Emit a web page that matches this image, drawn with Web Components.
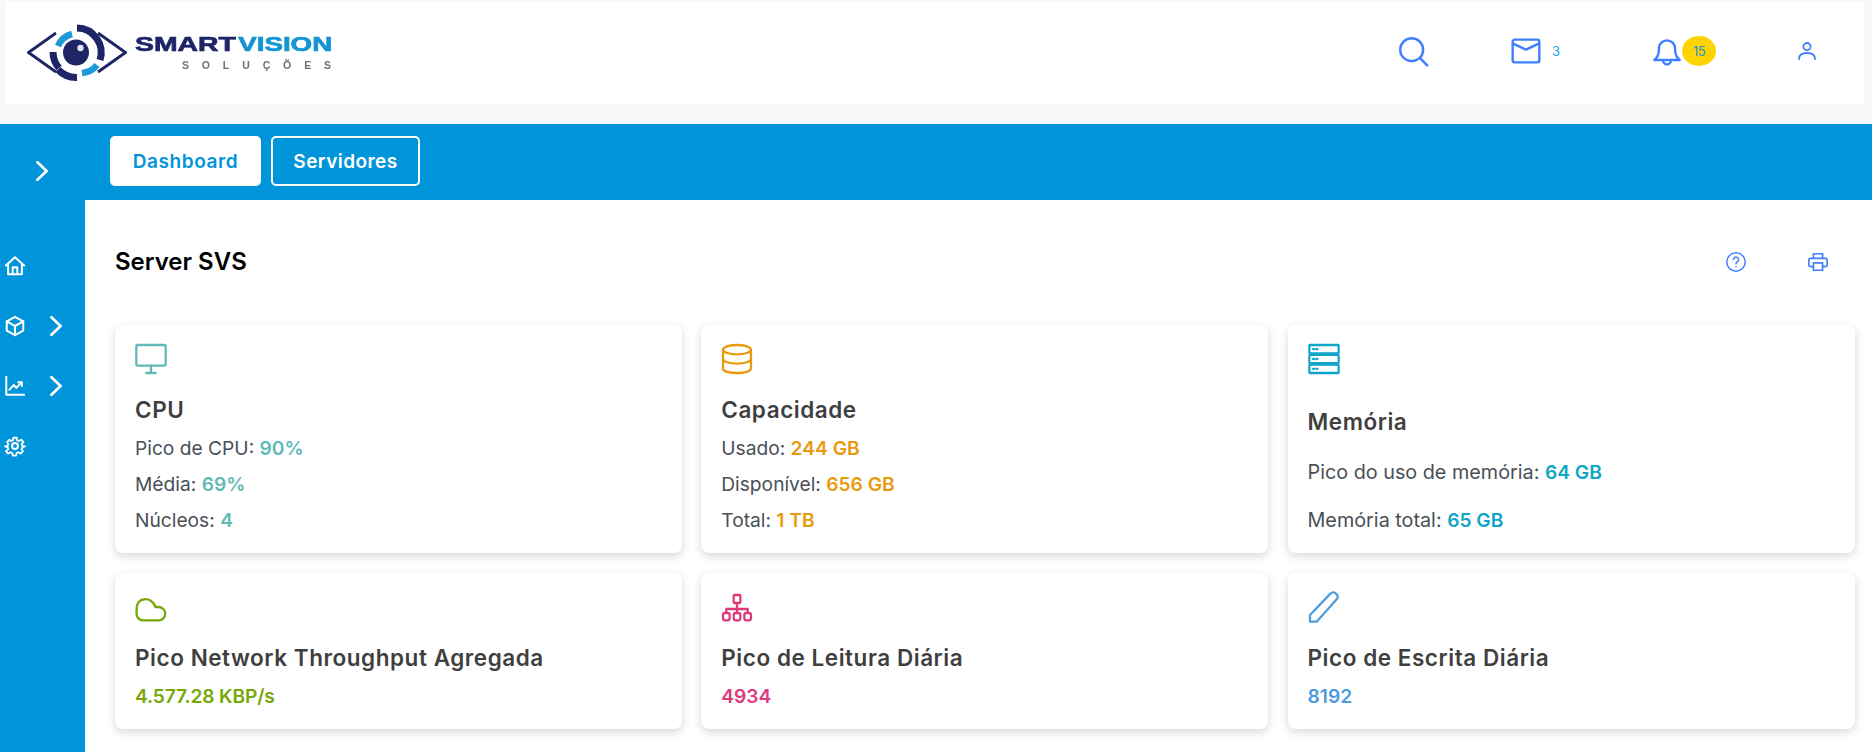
<!DOCTYPE html>
<html lang="pt"><head><meta charset="utf-8"><title>Server SVS</title>
<style>html,body{margin:0;height:752px;overflow:hidden;background:#f7f8fa}body{font-family:Inter,"Liberation Sans",sans-serif}</style>
</head><body>
<sv-app>
  <sv-header slot="header"></sv-header>
  <sv-sidebar slot="sidebar"></sv-sidebar>
  <sv-tabs slot="tabs"></sv-tabs>
  <sv-title slot="main">Server SVS</sv-title>
  <sv-grid slot="main">
    <stat-card icon="monitor" color="#5fbab8" title="CPU"><p>Pico de CPU: <b>90%</b></p><p>Média: <b>69%</b></p><p>Núcleos: <b>4</b></p></stat-card>
    <stat-card icon="database" color="#e99a0c" title="Capacidade"><p>Usado: <b>244 GB</b></p><p>Disponível: <b>656 GB</b></p><p>Total: <b>1 TB</b></p></stat-card>
    <stat-card icon="server" color="#0ea5c9" title="Memória" spread><p>Pico do uso de memória: <b>64 GB</b></p><p>Memória total: <b>65 GB</b></p></stat-card>
    <stat-card icon="cloud" color="#76a80a" title="Pico Network Throughput Agregada"><p><b style="letter-spacing:-.15px">4.577.28 KBP/s</b></p></stat-card>
    <stat-card icon="network" color="#dc3a7c" title="Pico de Leitura Diária"><p><b>4934</b></p></stat-card>
    <stat-card icon="pen" color="#4c9bdc" title="Pico de Escrita Diária"><p><b>8192</b></p></stat-card>
  </sv-grid>
</sv-app>
<script>
const P={
 search:'<circle cx="11" cy="11" r="8.6"/><path d="M17.3 17.3 22.6 22.8"/>',
 mail:'<rect x="2" y="3.5" width="20" height="17" rx="1.5"/><path d="M2.4 6.5 12 11l9.6-4.5"/>',
 bell:'<path d="M6 10a6 6 0 0 1 12 0c0 5 1 7 3.500 8.800h-19C5 17 6 15 6 10Z"/><path d="M9 19a3 3 0 0 0 6 0"/>',
 user:'<circle cx="12" cy="7.600" r="3.600"/><path d="M4 20c0-4 3.500-6 8-6s8 2 8 6"/>',
 help:'<circle cx="12" cy="12" r="10"/><path d="M9.200 9.300a2.800 2.800 0 1 1 4.400 2.400c-1 .7-1.600 1.200-1.600 2.600"/><path d="M12 17.200v.3"/>',
 print:'<path d="M7 8V3h10v5"/><path d="M7 17H4a2 2 0 0 1-2-2v-5a2 2 0 0 1 2-2h16a2 2 0 0 1 2 2v5a2 2 0 0 1-2 2h-3"/><rect x="7" y="13" width="10" height="8"/>',
 home:'<path d="M2 11.500 12 2.500l10 9"/><path d="M4.500 9.500V21h15V9.500"/><path d="M9.500 21v-7.500h5V21"/>',
 cube:'<path d="M12 2 21 7v10l-9 5-9-5V7Z"/><path d="M3 7l9 5 9-5M12 12v10"/>',
 chart:'<path d="M2.500 2v19.500H22"/><path d="M6 16l4.500-5 3 3 5.500-6"/><path d="M15.500 8H19.500v4"/>',
 gear:'<circle cx="12" cy="12" r="3.200"/><path d="M10 2h4l.6 3 2.300 1 2.600-1.600 2.800 2.800L20 9.800l1 2.200 3 .6v0l-3 .9-1 2.300 1.600 2.600-2.800 2.800-2.600-1.600-2.300 1-.6 3h-4l-.6-3-2.300-1-2.600 1.600-2.800-2.800L4 15.800l-1-2.300-3-.9 3-.6 1-2.200-1.600-2.600 2.800-2.800L7.100 6l2.300-1Z" transform="translate(1.200 1.200) scale(.9)"/>',
 chev:'<path d="M6.500 1.500 17.500 12 6.500 22.500"/>',
 monitor:'<rect x="1" y="1.500" width="22" height="15.500" rx=".8"/><path d="M12 17v5M8.500 22.500h7"/>',
 database:'<ellipse cx="12" cy="5" rx="10.500" ry="3.500"/><path d="M1.500 5v14.200c0 2 4.700 3.300 10.500 3.300s10.500-1.300 10.500-3.300V5"/><path d="M1.500 12c0 2 4.700 3.400 10.500 3.400S22.500 14 22.500 12"/>',
 server:'<rect x="1" y="1.500" width="22" height="6.200" rx=".6"/><rect x="1" y="8.900" width="22" height="6.200" rx=".6"/><rect x="1" y="16.300" width="22" height="6.200" rx=".6"/><path d="M3.800 4.600h.8M6.300 4.600h.8M3.800 12h.8M6.300 12h.8M3.800 19.400h.8M6.300 19.400h.8"/>',
 cloud:'<path d="M6 22a4.800 4.800 0 0 1-4.800-5C1 13.500 1 10.500 2.800 8.300 4.800 5.800 9 5.500 11.800 7.300c2 1.300 3 3 3.600 4.700h2.300a5 5 0 0 1 0 10Z"/>',
 network:'<rect x="9.500" y="3" width="5" height="6" rx=".8"/><path d="M12 9v4.500M4 16.500v-3h16v3M12 13.500v3"/><rect x="1.500" y="16.500" width="5" height="5.500" rx="1.500"/><rect x="9.500" y="16.500" width="5" height="5.500" rx="1.500"/><rect x="17.500" y="16.500" width="5" height="5.500" rx="1.500"/>',
 pen:'<path d="M1.500 23v-5L17 1.800a2.500 2.500 0 0 1 3.500-.2l1 .9a2.500 2.500 0 0 1 .2 3.500L6.500 23Z"/>'
};
function ic(n,s,w,c){return `<svg width="${s}" height="${s}" viewBox="0 0 24 24" fill="none" stroke="${c||'currentColor'}" stroke-width="${w}" stroke-linecap="round" stroke-linejoin="round" aria-hidden="true">${P[n]}</svg>`}
class Base extends HTMLElement{constructor(){super();this.attachShadow({mode:'open'})}}
customElements.define('sv-app',class extends Base{connectedCallback(){this.shadowRoot.innerHTML=`<style>
:host{display:grid;grid-template-columns:85px 1fr;grid-template-rows:124px 76px 552px;height:752px;color:#000}
.top{grid-column:1/3;padding:1px 8px 20px 5px;box-sizing:border-box;height:124px}
.side{grid-row:2/4;background:#0095db}
.tabs{background:#0095db}
.main{background:#fff;padding:0 18px 0 30px;min-width:0;overflow:hidden}
</style><div class="top"><slot name="header"></slot></div><div class="side"><slot name="sidebar"></slot></div><div class="tabs"><slot name="tabs"></slot></div><div class="main"><slot name="main"></slot></div>`}});
customElements.define('sv-header',class extends Base{connectedCallback(){this.shadowRoot.innerHTML=`<style>
:host{display:flex;align-items:center;background:#fff;height:103px;color:#3f7fff}
.logo{display:flex;align-items:center;margin-left:22px;gap:8px}
.logo svg{filter:blur(.5px)}
.word{display:flex;flex-direction:column;align-items:flex-end;width:197px;font-family:"Liberation Sans",sans-serif;filter:blur(.5px)}
.w1{display:flex;justify-content:space-between;width:197px;font-weight:700;font-size:21px;line-height:18px;-webkit-text-stroke:.7px}
.w1 span:first-child{color:#1d2566;display:inline-block;transform:scaleX(1.35);transform-origin:left}
.w1 span:last-child{color:#1394d3;display:inline-block;transform:scaleX(1.32);transform-origin:right}
.w2{font-size:10.500px;line-height:12px;letter-spacing:12.900px;margin-right:-12px;margin-top:6px;color:#6c6f7c;font-weight:700}
.icons{margin-left:auto;display:flex;align-items:center;height:40px;margin-top:-3px}
.i{display:flex;position:relative}
.n3{font:13px Inter,sans-serif;color:#1aa4e8;margin-left:10px}
.badge{width:34px;height:30px;border-radius:50%;background:#fdd400;color:#1e90d8;font:13px/30px Inter,sans-serif;text-align:center;margin-left:-1px;letter-spacing:-.5px}
</style><div class="logo"><svg width="100" height="60" viewBox="0 0 100 60" fill="none" aria-hidden="true">
<path d="M29 10 1.500 29.500 29 49M71 10 98.500 29.500 71 49" stroke="#1d2566" stroke-width="2.800"/>
<path d="M50 5a24.500 24.500 0 0 1 23 32M32 45a24.500 24.500 0 0 1-6-16" stroke="#1d2566" stroke-width="7"/>
<path d="M31 46.500a25 25 0 0 0 19 8" stroke="#1d2566" stroke-width="7"/>
<path d="M70 42a21 21 0 0 1-15 8M31 23a21 21 0 0 1 14-12" stroke="#1b9ad8" stroke-width="6.500"/>
<circle cx="49" cy="29.500" r="13" fill="#1d2566"/><circle cx="53.500" cy="25" r="3.200" fill="#dfe3f2"/></svg>
<div class="word"><div class="w1"><span>SMART</span><span>VISION</span></div><div class="w2">SOLUÇÕES</div></div></div>
<div class="icons">
<span class="i" style="margin-right:81px">${ic('search',32,1.800)}</span>
<span class="i">${ic('mail',32,1.800)}</span><span class="n3" style="margin-right:91px">3</span>
<span class="i">${ic('bell',32,1.800)}</span><span class="badge" style="margin-right:79px">15</span>
<span class="i" style="margin-right:45px">${ic('user',24,1.800)}</span>
</div>`}});
customElements.define('sv-sidebar',class extends Base{connectedCallback(){const row=(n,c)=>`<div class="r">${ic(n,22,2.200,'#fff')}${c?`<span class="c">${ic('chev',20,3.200,'#fff')}</span>`:''}</div>`;
this.shadowRoot.innerHTML=`<style>
:host{display:block;height:100%}
.t{height:76px;display:flex;align-items:center;justify-content:center;padding-top:17px;padding-right:1px;box-sizing:border-box}
.r{height:60px;display:flex;align-items:center;padding-left:4px;box-sizing:border-box}
.c{margin-left:20px;display:flex}
.list{margin-top:36px}
svg{display:block}
</style><div class="t">${ic('chev',20,3.200,'#fff')}</div><div class="list">${row('home')}${row('cube',1)}${row('chart',1)}${row('gear')}</div>`}});
customElements.define('sv-tabs',class extends Base{connectedCallback(){this.shadowRoot.innerHTML=`<style>
:host{display:flex;align-items:flex-start;gap:10px;padding:12px 0 0 25px}
a{display:flex;align-items:center;justify-content:center;height:50px;box-sizing:border-box;border-radius:5px;font:600 19px Inter,sans-serif;color:#fff}
.a{width:151px;background:#fff;color:#0095db;letter-spacing:.6px}.b{width:149px;border:2px solid #fff;letter-spacing:.45px}
</style><a class="a">Dashboard</a><a class="b">Servidores</a>`}});
customElements.define('sv-title',class extends Base{connectedCallback(){this.shadowRoot.innerHTML=`<style>
:host{display:flex;align-items:center;height:125px;padding-bottom:2px;color:#000;box-sizing:border-box}
h1{font:600 24px Inter,sans-serif;margin:0;flex:1}
.ic{display:flex;color:#3f7fff;gap:60px;margin-right:25px}
</style><h1><slot></slot></h1><div class="ic">${ic('help',22,1.600)}${ic('print',22,1.800)}</div>`}});
customElements.define('sv-grid',class extends Base{connectedCallback(){this.shadowRoot.innerHTML=`<style>
:host{display:grid;grid-template-columns:repeat(3,567px);column-gap:19.250px;row-gap:20px}
</style><slot></slot>`}});
customElements.define('stat-card',class extends Base{connectedCallback(){const sp=this.hasAttribute('spread');const c=this.getAttribute('color');
this.style.setProperty('--c',c);
this.shadowRoot.innerHTML=`<style>
:host{display:block;background:#fff;border-radius:8px;box-shadow:0 3px 10px rgba(0,0,0,.16);padding:16px 20px 15px;box-sizing:border-box;color:#495057}
.icon{height:34px;display:flex;align-items:flex-end;color:var(--c)}
h2{font:600 22.500px/30px Inter,sans-serif;letter-spacing:.55px;color:#3f3f3f;margin:${sp?32:20}px 0 ${sp?17:5}px}
.l{display:flex;flex-direction:column;gap:${sp?12:0}px;font:400 ${sp?19.8:19.2}px/36px Inter,sans-serif}
::slotted(p){margin:0;height:36px;color:#495057}
</style><div class="icon">${ic(this.getAttribute('icon'),32,1.700)}</div><h2>${this.getAttribute('title')}</h2><div class="l"><slot></slot></div>`;
this.removeAttribute('title');
this.querySelectorAll('b').forEach(b=>{b.style.color=c;b.style.fontWeight=600;b.style.fontSize='19.200px'});}});
</script>
</body></html>
